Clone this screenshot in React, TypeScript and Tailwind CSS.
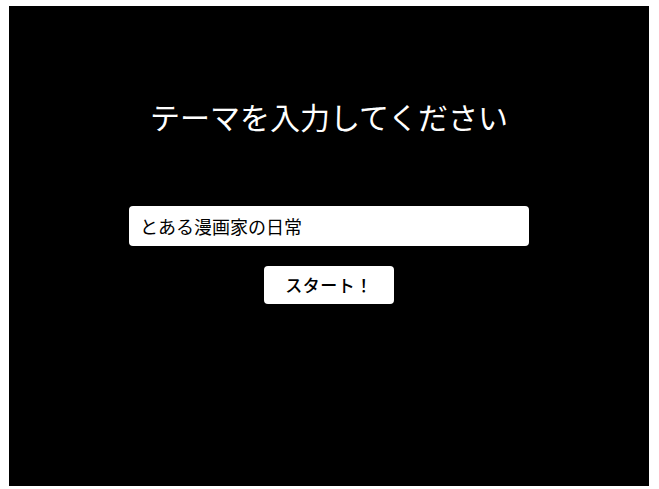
export default function App() {
  return (
    <div className="min-h-screen bg-white pl-[9px] pt-[6px]" style={{ fontFamily: '"Noto Sans CJK JP", "Noto Sans", sans-serif' }}>
      <div className="flex h-[480px] w-[640px] flex-col items-center bg-black pt-[90px]">
        <h1 className="text-[30px] leading-[40px] font-normal text-white">テーマを入力してください</h1>
        <input
          type="text"
          defaultValue="とある漫画家の日常"
          className="mt-[70px] h-[40px] w-[400px] rounded-[4px] bg-white px-[11px] text-[18px] text-black outline-none"
        />
        <button className="mt-[20px] h-[38px] w-[130px] rounded-[4px] bg-white text-[17px] font-medium tracking-[0.5px] text-black">
          スタート！
        </button>
      </div>
    </div>
  );
}
